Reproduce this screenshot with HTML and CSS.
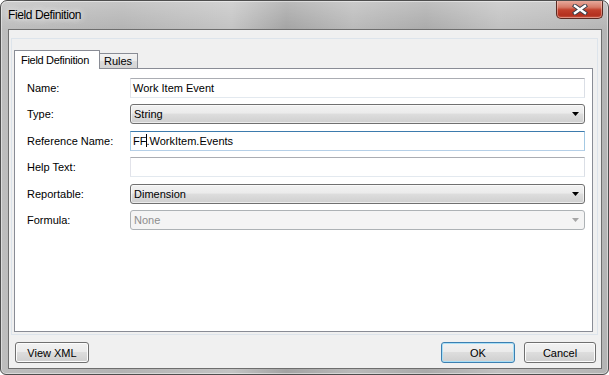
FILE: index.html
```html
<!DOCTYPE html>
<html lang="en">
<head>
  <meta charset="UTF-8">
  <title>Field Definition</title>
  <link rel="stylesheet" href="styles.css">
</head>
<body>
  <div class="window">
    <div class="titlebar">
      <span class="title">Field Definition</span>
      <div class="close">
        <svg width="16" height="11" viewBox="0 0 16 11">
          <path d="M3 2 L13 9 M13 2 L3 9" stroke="#3a3f4a" stroke-width="4.4" stroke-linecap="square"/>
          <path d="M3 2 L13 9 M13 2 L3 9" stroke="#ffffff" stroke-width="2.4" stroke-linecap="square"/>
        </svg>
      </div>
    </div>

    <div class="client">
      <div class="tabgroup">
        <div class="tabs">
          <div class="tab active">Field Definition</div>
          <div class="tab rules">Rules</div>
        </div>
        <div class="page">
          <div class="form">
            <label>Name:</label>
            <div class="textbox">Work Item Event</div>

            <label>Type:</label>
            <div class="combo">String
              <svg class="arrow" width="7" height="4" viewBox="0 0 7 4"><path d="M0 0 H7 L3.5 4 Z" fill="#000"/></svg>
            </div>

            <label>Reference Name:</label>
            <div class="textbox focused">FF<span class="caret"></span>.WorkItem.Events</div>

            <label>Help Text:</label>
            <div class="textbox"></div>

            <label>Reportable:</label>
            <div class="combo">Dimension
              <svg class="arrow" width="7" height="4" viewBox="0 0 7 4"><path d="M0 0 H7 L3.5 4 Z" fill="#000"/></svg>
            </div>

            <label>Formula:</label>
            <div class="combo disabled">None
              <svg class="arrow" width="7" height="4" viewBox="0 0 7 4"><path d="M0 0 H7 L3.5 4 Z" fill="#a6a6a6"/></svg>
            </div>
          </div>
        </div>
      </div>

      <div class="buttons">
        <button class="btn xml">View XML</button>
        <span class="spacer"></span>
        <button class="btn default ok">OK</button>
        <button class="btn cancel">Cancel</button>
      </div>
    </div>
  </div>
</body>
</html>
```

FILE: styles.css
```css
body {
  margin: 0;
  font-family: "Liberation Sans", Arial, sans-serif;
  font-size: 11px;
  color: #000;
  background: #fff;
}
.window {
  width: 609px;
  height: 375px;
  box-sizing: border-box;
  border: 1px solid #4e4e4e;
  border-radius: 7px 7px 6px 6px;
  padding: 0 6px 5px 7px;
  display: flex;
  flex-direction: column;
  background:
    linear-gradient(180deg, rgba(255,255,255,0.25) 0px, rgba(255,255,255,0) 30px),
    linear-gradient(90deg, #bdbdbd 0%, #b3b3b3 20%, #c3c3c3 38%, #a3a3a3 47%, #b9b9b9 58%, #aaaaaa 70%, #c0c0c0 82%, #b4b4b4 100%);
  box-shadow: inset 0 0 0 1px rgba(255,255,255,0.45);
  overflow: hidden;
}
.titlebar {
  height: 28px;
  display: flex;
  align-items: flex-start;
}
.title {
  margin-top: 7px;
  font-size: 12px;
  letter-spacing: -0.4px;
  text-shadow: 0 0 6px rgba(255,255,255,0.9), 0 0 10px rgba(255,255,255,0.6);
}
.close {
  margin-left: auto;
  margin-right: -1px;
  margin-top: -1px;
  width: 47px;
  height: 19px;
  box-sizing: border-box;
  border: 1px solid #5a2a22;
  border-top: none;
  border-radius: 0 0 5px 5px;
  background: linear-gradient(180deg, #eab1a4 0%, #d67a68 40%, #c1402c 55%, #b3301e 85%, #c85a45 100%);
  box-shadow: inset 0 0 0 1px rgba(255,220,210,0.45);
  display: flex;
  align-items: center;
  justify-content: center;
}
.client {
  flex: 1;
  background: #f0f0f0;
  border: 1px solid #6e6e6e;
  display: flex;
  flex-direction: column;
  padding: 8px 3px 0 2px;
}
.tabgroup {
  height: 297px;
  box-sizing: border-box;
  border: 1px solid #dde4eb;
  padding: 11px 4px 2px 2px;
  display: flex;
  flex-direction: column;
}
.tabs {
  display: flex;
  align-items: flex-end;
  height: 18px;
}
.tab {
  box-sizing: border-box;
  border: 1px solid #898c95;
  border-bottom: none;
  height: 15px;
  line-height: 15px;
  white-space: nowrap;
  overflow: hidden;
}
.tab.rules {
  width: 39px;
  margin-left: -1px;
  padding-left: 4px;
  background: linear-gradient(180deg, #f3f3f3 0%, #ebebeb 50%, #dcdcdc 51%, #d4d4d4 100%);
}
.tab.active {
  width: 86px;
  height: 19px;
  line-height: 18px;
  padding-left: 6px;
  letter-spacing: -0.3px;
  background: #fff;
  position: relative;
  z-index: 1;
  margin-bottom: -1px;
  border-radius: 1px 1px 0 0;
}
.page {
  flex: 1;
  background: #fff;
  border: 1px solid #898c95;
  padding: 9px 7px 0 12px;
}
.form {
  display: grid;
  grid-template-columns: 103px 1fr;
  grid-auto-rows: 20px;
  row-gap: 6.4px;
  align-items: center;
}
.form label {
  line-height: 20px;
}
.textbox {
  height: 20px;
  box-sizing: border-box;
  border: 1px solid;
  border-color: #abadb3 #dbdfe6 #e3e9ef #e2e3ea;
  padding-left: 2px;
  line-height: 18px;
  white-space: nowrap;
}
.textbox.focused {
  border-color: #3d7bad #a4c9e3 #b5cfe7 #a4c9e3;
}
.caret {
  display: inline-block;
  width: 1px;
  height: 13px;
  background: #000;
  vertical-align: -2px;
  margin-right: -1px;
}
.combo {
  height: 20px;
  box-sizing: border-box;
  border: 1px solid #707070;
  border-radius: 3px;
  padding-left: 3px;
  line-height: 18px;
  display: flex;
  align-items: center;
  background: linear-gradient(180deg, #f2f2f2 0%, #ebebeb 45%, #dddddd 50%, #cfcfcf 100%);
  box-shadow: inset 0 0 0 1px rgba(255,255,255,0.6);
}
.combo .arrow {
  margin-left: auto;
  margin-right: 5px;
}
.combo.disabled {
  border-color: #adb2b5;
  background: #f4f4f4;
  color: #8d8d8d;
  box-shadow: none;
}
.buttons {
  display: flex;
  margin-top: 7px;
  padding: 0 2px 0 4px;
}
.spacer {
  flex: 1;
}
.btn {
  font-family: "Liberation Sans", Arial, sans-serif;
  font-size: 11px;
  color: #000;
  height: 21px;
  box-sizing: border-box;
  padding: 0;
  border: 1px solid #707070;
  border-radius: 3px;
  background: linear-gradient(180deg, #f2f2f2 0%, #ebebeb 45%, #dddddd 50%, #cfcfcf 100%);
  box-shadow: inset 0 0 0 1px #fcfcfc;
}
.xml {
  width: 74px;
}
.ok {
  width: 74px;
  margin-right: 9px;
}
.cancel {
  width: 72px;
}
.btn.default {
  border-color: #3c7fb1;
  box-shadow: inset 0 0 0 1px #a9dff6;
}
```
